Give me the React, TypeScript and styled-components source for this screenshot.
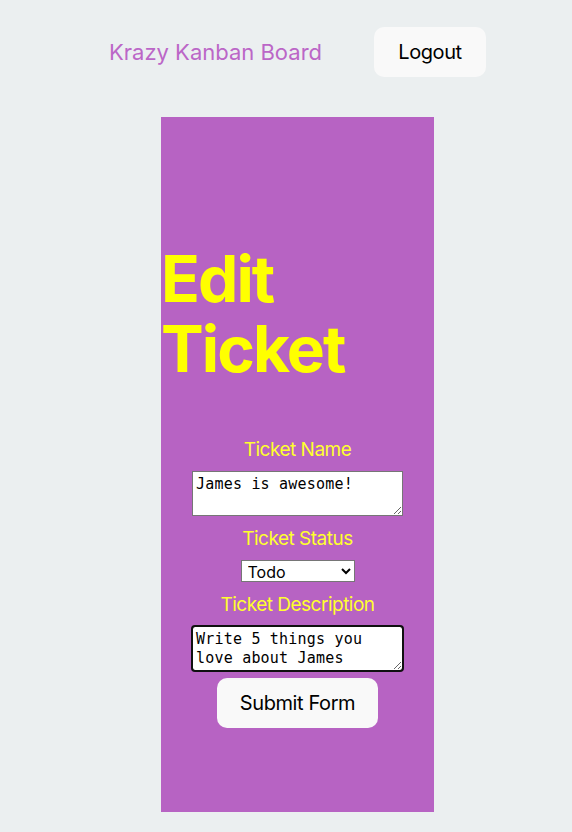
import React from "react";
import styled, { createGlobalStyle } from "styled-components";

const Global = createGlobalStyle`
  html, body { margin: 0; padding: 0; }
  body {
    background: #ebeff0;
    font-family: Inter, "Liberation Sans", sans-serif;
    color: #213547;
  }
`;

const Page = styled.div`
  width: 572px;
  min-height: 832px;
  display: flex;
  flex-direction: column;
`;

const Nav = styled.nav`
  display: flex;
  align-items: center;
  gap: 51px;
  padding: 27px 0 0 109px;
  height: 50px;
`;

const Brand = styled.h2`
  margin: 0;
  width: 214px;
  font-size: 22px;
  font-weight: 400;
  color: #bb66c7;
  line-height: 1.5;
  white-space: nowrap;
`;

const Button = styled.button<{ $w: number }>`
  width: ${(p) => p.$w}px;
  height: 50px;
  border: 1px solid transparent;
  border-radius: 10px;
  background: #f9f9f9;
  color: #000;
  font-family: Inter, "Liberation Sans", sans-serif;
  font-size: 20px;
  font-weight: 400;
  letter-spacing: -0.4px;
  padding: 0;
  cursor: pointer;
`;

const Card = styled.main`
  margin: 40px 0 0 161px;
  width: 273px;
  height: 695px;
  background: #b763c3;
  box-sizing: border-box;
  padding-top: 127px;
  display: flex;
  flex-direction: column;
`;

const Title = styled.h1`
  margin: 0 0 49px 0;
  font-size: 64px;
  line-height: 1.1;
  font-weight: 700;
  color: #ffff00;
  letter-spacing: -1.9px;
`;

const Form = styled.form`
  display: flex;
  flex-direction: column;
  align-items: center;
  gap: 7px;
`;

const Label = styled.label`
  font-size: 19px;
  line-height: 30px;
  padding-top: 1px;
  margin-bottom: -1px;
  color: #ffff2e;
  letter-spacing: -0.5px;
`;

const TextArea = styled.textarea<{ $focused?: boolean }>`
  width: 211px;
  height: 45px;
  box-sizing: border-box;
  border: 1px solid #767676;
  border-radius: ${(p) => (p.$focused ? "3px" : "0")};
  padding: 3px 3px 2px;
  font-family: "DejaVu Sans Mono", monospace;
  font-size: 15px;
  letter-spacing: 0.2px;
  line-height: 19px;
  color: #000;
  background: #fff;
  resize: both;
  outline: ${(p) => (p.$focused ? "2px solid #101010" : "none")};
  outline-offset: -1px;
`;

const Select = styled.select`
  width: 114px;
  height: 22px;
  box-sizing: border-box;
  font-family: Inter, "Liberation Sans", sans-serif;
  font-size: 16px;
  color: #000;
  background: #fff;
  border: 1px solid #767676;
  border-radius: 0;
  padding: 0 2px;
`;

export default function App() {
  return (
    <>
      <Global />
      <Page>
        <Nav>
          <Brand>Krazy Kanban Board</Brand>
          <Button $w={112} type="button">Logout</Button>
        </Nav>
        <Card>
          <Title>Edit Ticket</Title>
          <Form onSubmit={(e) => e.preventDefault()}>
            <Label htmlFor="tName">Ticket Name</Label>
            <TextArea id="tName" defaultValue="James is awesome!" />
            <Label htmlFor="tStatus">Ticket Status</Label>
            <Select id="tStatus" defaultValue="Todo">
              <option>Todo</option>
              <option>In Progress</option>
              <option>Done</option>
            </Select>
            <Label htmlFor="tDesc">Ticket Description</Label>
            <TextArea
              id="tDesc"
              $focused
              defaultValue="Write 5 things you love about James"
            />
            <Button $w={161} type="submit">Submit Form</Button>
          </Form>
        </Card>
      </Page>
    </>
  );
}
